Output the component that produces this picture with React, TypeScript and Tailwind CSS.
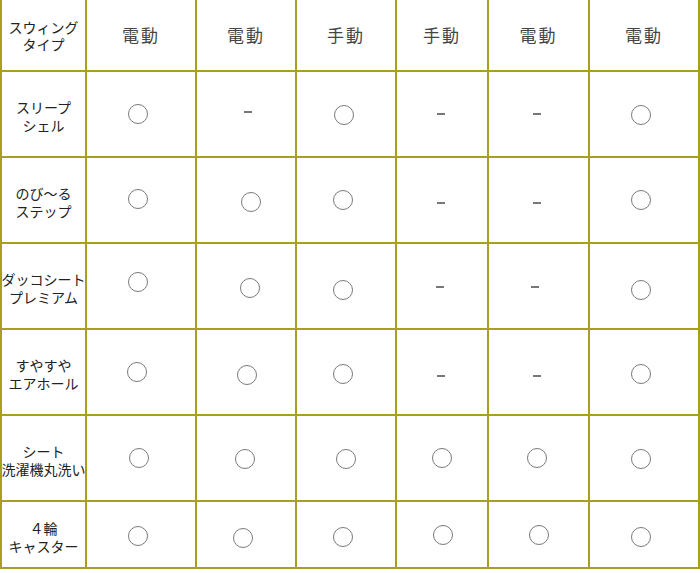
import React from "react";

type Mark = { k: "o" | "-"; c: string };

const headers = ["電動", "電動", "手動", "手動", "電動", "電動"];

const rows: { label: string[]; marks: Mark[] }[] = [
  {
    label: ["スリープ", "シェル"],
    marks: [
      { k: "o", c: "-translate-x-[3px]" },
      { k: "-", c: "translate-x-[2px] -translate-y-[2px]" },
      { k: "o", c: "-translate-x-[2px] translate-y-[1px]" },
      { k: "-", c: "-translate-x-[1px]" },
      { k: "-", c: "-translate-x-[2px]" },
      { k: "o", c: "-translate-x-[3px] translate-y-[1px]" },
    ],
  },
  {
    label: ["のび～る", "ステップ"],
    marks: [
      { k: "o", c: "-translate-x-[3px] -translate-y-[1px]" },
      { k: "o", c: "translate-x-[5px] translate-y-[2px]" },
      { k: "o", c: "-translate-x-[3px]" },
      { k: "-", c: "-translate-x-[1px] translate-y-[3px]" },
      { k: "-", c: "-translate-x-[2px] translate-y-[3px]" },
      { k: "o", c: "-translate-x-[3px]" },
    ],
  },
  {
    label: ["ダッコシート", "プレミアム"],
    marks: [
      { k: "o", c: "-translate-x-[3px] -translate-y-[4px]" },
      { k: "o", c: "translate-x-[4px] translate-y-[2px]" },
      { k: "o", c: "-translate-x-[3px] translate-y-[4px]" },
      { k: "-", c: "-translate-x-[2px] translate-y-[1px]" },
      { k: "-", c: "-translate-x-[4px] translate-y-[1px]" },
      { k: "o", c: "-translate-x-[3px] translate-y-[4px]" },
    ],
  },
  {
    label: ["すやすや", "エアホール"],
    marks: [
      { k: "o", c: "-translate-x-[4px]" },
      { k: "o", c: "translate-x-[1px] translate-y-[3px]" },
      { k: "o", c: "-translate-x-[3px] translate-y-[2px]" },
      { k: "-", c: "-translate-x-[1px] translate-y-[4px]" },
      { k: "-", c: "-translate-x-[2px] translate-y-[4px]" },
      { k: "o", c: "-translate-x-[3px] translate-y-[2px]" },
    ],
  },
  {
    label: ["シート", "洗濯機丸洗い"],
    marks: [
      { k: "o", c: "-translate-x-[2px]" },
      { k: "o", c: "-translate-x-[1px] translate-y-[1px]" },
      { k: "o", c: "translate-y-[1px]" },
      { k: "o", c: "" },
      { k: "o", c: "-translate-x-[2px]" },
      { k: "o", c: "-translate-x-[3px] translate-y-[1px]" },
    ],
  },
  {
    label: ["４輪", "キャスター"],
    marks: [
      { k: "o", c: "-translate-x-[3px] translate-y-[1px]" },
      { k: "o", c: "-translate-x-[3px] translate-y-[3px]" },
      { k: "o", c: "-translate-x-[3px] translate-y-[2px]" },
      { k: "o", c: "translate-x-[1px]" },
      { k: "o", c: "" },
      { k: "o", c: "-translate-x-[3px] translate-y-[2px]" },
    ],
  },
];

const font = {
  fontFamily: '"Noto Sans CJK JP", "Noto Sans", sans-serif',
};

function LabelCell({ lines }: { lines: string[] }) {
  return (
    <div className="bg-white flex flex-col items-center justify-center text-[14px] leading-[18px] text-[#222] whitespace-nowrap pt-[4px]">
      {lines.map((l, i) => (
        <span key={i}>{l}</span>
      ))}
    </div>
  );
}

export default function App() {
  return (
    <div className="w-[700px] h-[573px] bg-white" style={font}>
      <div className="grid grid-cols-[83px_108px_98px_98px_90px_99px_108px] grid-rows-[70px_84px_84px_84px_84px_84px_65px] gap-[2px] bg-[#a99f1f] pl-[2px] pr-[2px] pb-[2px] w-[700px]">
        <div className="bg-white flex flex-col items-center justify-center text-[14px] leading-[17px] text-[#222] whitespace-nowrap pt-[2px]">
          <span>スウィング</span>
          <span>タイプ</span>
        </div>
        {headers.map((h, i) => (
          <div
            key={i}
            className="bg-white flex items-center justify-center text-[17px] tracking-[2px] text-[#444]"
          >
            {h}
          </div>
        ))}
        {rows.map((r, ri) => (
          <React.Fragment key={ri}>
            <LabelCell lines={r.label} />
            {r.marks.map((m, mi) => (
              <div key={mi} className="bg-white flex items-center justify-center">
                {m.k === "o" ? (
                  <div className={"w-[20px] h-[20px] rounded-full border-[1.5px] border-[#7a7a7a] " + m.c} />
                ) : (
                  <div className={"w-[8px] h-[2px] bg-[#777] " + m.c} />
                )}
              </div>
            ))}
          </React.Fragment>
        ))}
      </div>
    </div>
  );
}
